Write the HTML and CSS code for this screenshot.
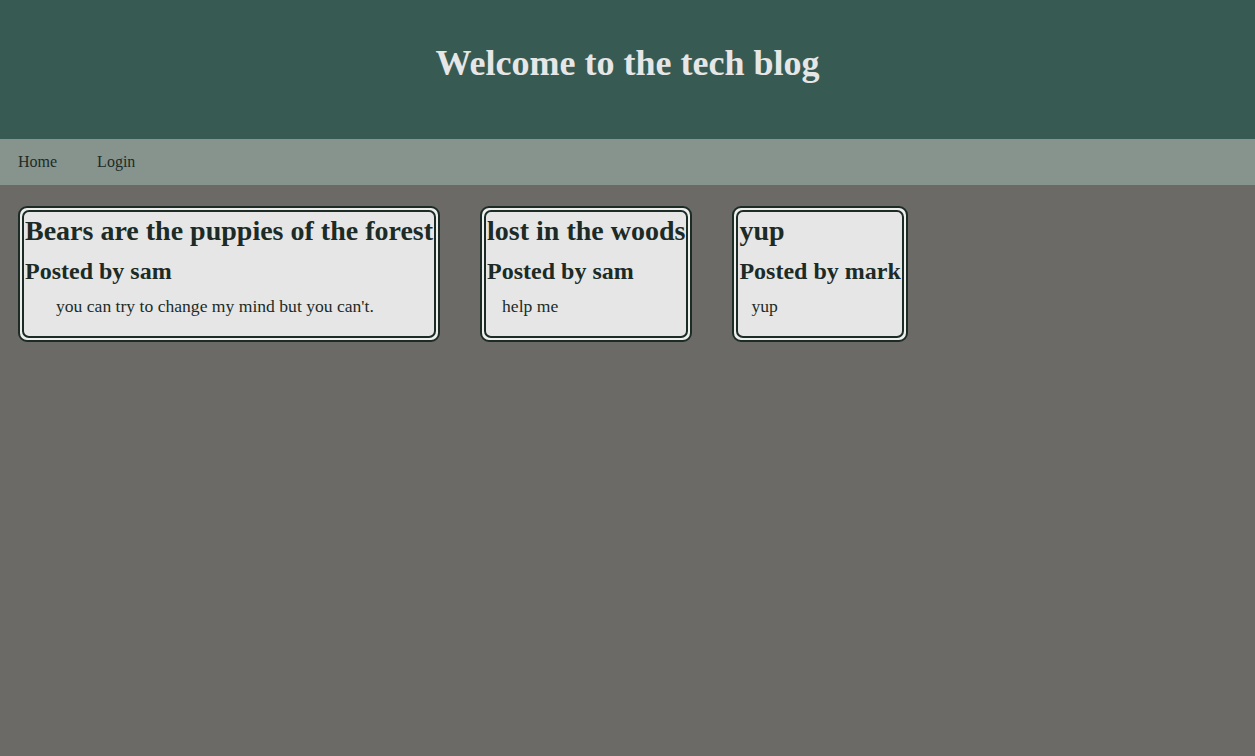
FILE: index.html
```html
<!DOCTYPE html>
<html lang="en">
<head>
<meta charset="utf-8">
<title>Tech Blog</title>
<link rel="stylesheet" href="styles.css">
</head>
<body>
<header class="site-header">
  <h1 class="site-title">Welcome to the tech blog</h1>
</header>
<nav class="site-nav">
  <a class="nav-link" href="#">Home</a>
  <a class="nav-link" href="#">Login</a>
</nav>
<main class="posts">
  <article class="post">
    <div class="post-inner">
      <h2 class="post-title">Bears are the puppies of the forest</h2>
      <h3 class="post-author">Posted by sam</h3>
      <p class="post-body indent-a">you can try to change my mind but you can't.</p>
    </div>
  </article>
  <article class="post">
    <div class="post-inner">
      <h2 class="post-title">lost in the woods</h2>
      <h3 class="post-author">Posted by sam</h3>
      <p class="post-body indent-b">help me</p>
    </div>
  </article>
  <article class="post">
    <div class="post-inner">
      <h2 class="post-title">yup</h2>
      <h3 class="post-author">Posted by mark</h3>
      <p class="post-body indent-c">yup</p>
    </div>
  </article>
</main>
</body>
</html>
```

FILE: styles.css
```css
html, body {
  margin: 0;
  padding: 0;
}
body {
  background: #6c6a66;
  font-family: "Liberation Serif", "Times New Roman", serif;
  color: #1c2b26;
  min-height: 756px;
}
.site-header {
  background: #375b53;
  height: 139px;
  display: flex;
  justify-content: center;
  align-items: flex-start;
}
.site-title {
  margin: 42px 0 0;
  font-size: 36px;
  font-weight: bold;
  color: #e6e6e6;
  line-height: 42px;
}
.site-nav {
  background: #87948e;
  height: 46px;
  display: flex;
  align-items: center;
  padding-left: 18px;
  gap: 40px;
}
.nav-link {
  color: #1c2b26;
  text-decoration: none;
  font-size: 16px;
}
.posts {
  display: flex;
  align-items: flex-start;
  gap: 40px;
  padding: 21px 18px;
}
.post {
  border: 2px solid #1c2b26;
  border-radius: 9px;
  padding: 2px;
  background: #eef0ee;
}
.post-inner {
  border: 2px solid #1c2b26;
  border-radius: 7px;
  background: #e6e6e6;
  padding: 0 1px 20px;
}
.post-title {
  margin: 3px 0 0;
  font-size: 28px;
  line-height: 32px;
  white-space: nowrap;
}
.post-author {
  margin: 10px 0 0;
  font-size: 24px;
  line-height: 28px;
  white-space: nowrap;
}
.post-body {
  margin: 11px 0 0;
  font-size: 17.6px;
  line-height: 20px;
}
.indent-a { padding-left: 31px; }
.indent-b { padding-left: 15px; }
.indent-c { padding-left: 12px; }
```
